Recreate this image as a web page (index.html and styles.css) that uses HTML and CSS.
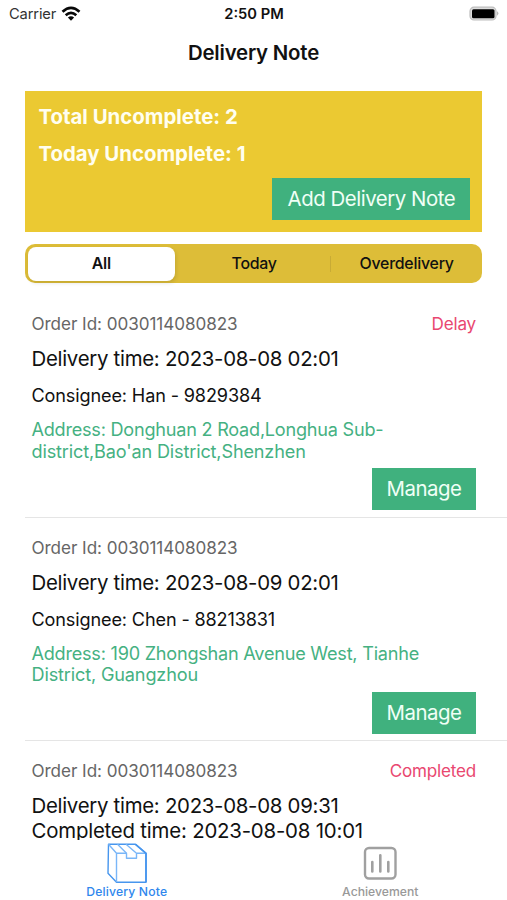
FILE: index.html
```html
<!DOCTYPE html>
<html lang="en">
<head>
<meta charset="utf-8">
<title>Delivery Note</title>
<link rel="stylesheet" href="styles.css">
</head>
<body>
<div class="screen">
  <header class="status-bar">
    <div class="carrier"><span>Carrier</span>
      <svg class="wifi" viewBox="0 0 20 16" width="20" height="16"><g fill="none" stroke="#080808" stroke-width="2.7"><path d="M1.500 5.800Q10-2 18.500 5.800"/><path d="M4.700 9.200Q10 4.500 15.300 9.200"/></g><path d="M6.900 11.500Q10 8.900 13.100 11.500L10 14.700Z" fill="#080808"/></svg>
    </div>
    <div class="clock">2:50 PM</div>
    <div class="battery"><svg viewBox="0 0 32 16" width="32" height="16"><rect x="3" y="1.200" width="26" height="12.800" rx="4" fill="#ddd" stroke="#bdbdbd" stroke-width="1.200"/><rect x="5" y="3.200" width="22.500" height="9" rx="1.500" fill="#000"/><path d="M30.200 5.300Q32.500 7.500 30.200 9.700Z" fill="#aaa"/></svg></div>
  </header>
  <h1 class="title">Delivery Note</h1>
  <section class="summary">
    <p class="total">Total Uncomplete: 2</p>
    <p class="today">Today Uncomplete: 1</p>
    <button class="button add">Add Delivery Note</button>
  </section>
  <nav class="segments">
    <button class="segment selected">All</button>
    <button class="segment other">Today</button>
    <button class="segment other divided">Overdelivery</button>
  </nav>
  <main class="orders">
    <article class="order">
      <div class="order-head"><span class="order-id">Order Id: 0030114080823</span><span class="state">Delay</span></div>
      <p class="time">Delivery time: 2023-08-08 02:01</p>
      <p class="consignee">Consignee: Han - 9829384</p>
      <p class="address"><span class="snug">Address: Donghuan 2 Road,Longhua Sub-</span><br>district,Bao'an District,Shenzhen</p>
      <button class="button manage">Manage</button>
    </article>
    <article class="order">
      <div class="order-head"><span class="order-id">Order Id: 0030114080823</span></div>
      <p class="time">Delivery time: 2023-08-09 02:01</p>
      <p class="consignee">Consignee: Chen - 88213831</p>
      <p class="address"><span class="snug">Address: 190 Zhongshan Avenue West, Tianhe</span><br>District, Guangzhou</p>
      <button class="button manage">Manage</button>
    </article>
    <article class="order">
      <div class="order-head"><span class="order-id">Order Id: 0030114080823</span><span class="state">Completed</span></div>
      <p class="time">Delivery time: 2023-08-08 09:31<br><span class="done">Completed time: 2023-08-08 10:01</span></p>
    </article>
  </main>
  <footer class="tabs">
    <a class="tab active">
      <svg viewBox="0 0 42 42" width="42" height="42" fill="none" stroke="#4796ee" stroke-width="1.400" stroke-linejoin="round"><path d="M2.500 2.300H29.500L40 11.300V40.300H10.500L2 31.300Z"/><path d="M2.500 2.300L10.500 11.300V40.300M10.500 11.300H20.500M31 11.300H40" stroke="#79b6f8"/><path d="M11.500 2.300L20.500 11.300V16.300H30.500V11.300L20 2.300" stroke="#79b6f8"/><path d="M29.500 2.300L40 11.300V40.300" stroke-width="1.700"/></svg>
      <span>Delivery Note</span>
    </a>
    <a class="tab">
      <svg viewBox="0 0 42 42" width="42" height="42" fill="none" stroke="#a0a0a0"><rect x="6" y="6" width="30.500" height="30.500" rx="4" stroke-width="2.400"/><g stroke-width="2.600" stroke-linecap="round"><path d="M13.300 20V29.500M21.300 13.300V29.500M29.300 20V29.500"/></g></svg>
      <span>Achievement</span>
    </a>
  </footer>
</div>
</body>
</html>
```

FILE: styles.css
```css
* { box-sizing: border-box; }
body { margin: 0; background: #fff; font-family: Inter, "Liberation Sans", sans-serif; color: #111; }
p, h1 { margin: 0; }
button { border: 0; padding: 0; font: inherit; color: inherit; background: none; }
.screen { width: 507px; height: 900px; overflow: hidden; display: flex; flex-direction: column; white-space: nowrap; }
.status-bar { height: 27px; flex: none; display: grid; grid-template-columns: 1fr 1fr 1fr; align-items: center; padding: 0 8px 0 9px; }
.carrier { display: flex; align-items: center; gap: 5px; font-size: 14.7px; letter-spacing: -.15px; color: #333; }
.wifi { display: block; }
.clock { text-align: center; font-size: 14.7px; font-weight: 600; }
.battery { display: flex; justify-content: flex-end; }
.title { height: 51px; flex: none; text-align: center; font-size: 20.4px; letter-spacing: -.2px; line-height: 51px; font-weight: 600; }
.summary { width: 457px; height: 141px; flex: none; margin: 13px 0 0 25.400px; padding: 7px 12px 12px 13px; display: flex; flex-direction: column; background: #ebc932; color: #fffef0; font-size: 20.4px; font-weight: 700; line-height: 37px; }
.button { height: 42px; flex: none; background: #40b17e; color: #f0fff6; font-size: 20.4px; font-weight: 400; letter-spacing: -.45px; line-height: 42px; align-self: flex-end; }
.add { width: 198px; margin-top: 6px; }
.segments { width: 457px; height: 39px; flex: none; margin: 12px 0 0 25.400px; padding: 2.500px; border-radius: 10px; display: grid; grid-template-columns: 147px 1fr 149.500px; background: #ddbd38; font-size: 15.9px; font-weight: 500; }
.segment { height: 34px; text-align: center; line-height: 34px; letter-spacing: -.25px; }
.selected { background: #fff; border-radius: 8px; box-shadow: 1px 2px 4px #0000001f; font-weight: 600; }
.other { padding-left: 3px; }
.divided { background: linear-gradient(#c8ab35, #c8ab35) left center / 1px 16px no-repeat; }
.orders { flex: 1; min-height: 0; overflow: hidden; padding: 11px 0 0 25px; }
.order { height: 223.600px; padding: 20.300px 31px 6px 6.500px; display: flex; flex-direction: column; border-bottom: 1px solid #e5e5e5; }
.order-head { display: flex; flex: none; justify-content: space-between; line-height: 20px; height: 20px; font-size: 17.1px; letter-spacing: -.05px; color: #666; }
.state { color: #e94770; letter-spacing: -.2px; }
.time { margin-top: 13px; font-size: 20.4px; letter-spacing: -.28px; line-height: 24.700px; }
.done { letter-spacing: -.2px; }
.consignee { margin-top: 12px; font-size: 18.1px; letter-spacing: -.14px; line-height: 22px; }
.address { margin-top: 13px; font-size: 18.1px; letter-spacing: -.15px; line-height: 21.500px; color: #45b182; }
.snug { letter-spacing: -.23px; }
.manage { width: 104px; margin-top: 6px; }
.tabs { height: 60px; flex: none; display: grid; grid-template-columns: 1fr 1fr; background: #fff; }
.tab { display: flex; flex-direction: column; align-items: center; padding-top: 2px; font-size: 12.2px; font-weight: 500; line-height: 15px; color: #999; }
.tab svg { display: block; flex: none; }
.active { color: #2f87ed; letter-spacing: .15px; }
```
